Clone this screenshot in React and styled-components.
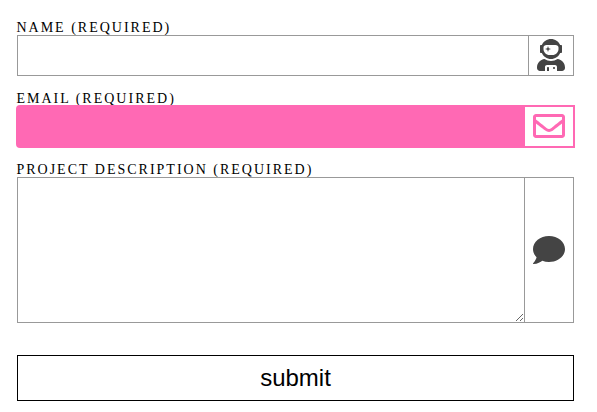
import React from "react";
import styled, { createGlobalStyle, css } from "styled-components";
import { FaUserAstronaut, FaRegEnvelope, FaComment } from "react-icons/fa";

const GlobalStyle = createGlobalStyle`
  *, *::before, *::after { box-sizing: border-box; }
  body { margin: 0; background: #fff; }
`;

const Form = styled.form`
  display: flex;
  flex-direction: column;
  gap: 14px;
  width: 597px;
  padding: 19px 23px 0 17px;
`;

const Field = styled.div`
  display: flex;
  flex-direction: column;
`;

const Label = styled.label`
  height: 16px;
  margin-left: -0.6px;
  font: 14px/18px "Liberation Serif", "Times New Roman", serif;
  letter-spacing: 2px;
  text-transform: uppercase;
  white-space: nowrap;
  color: #000;
`;

const Group = styled.div`
  display: flex;
  height: ${({ $height }) => $height}px;
  border: 1px solid #999;
  color: #444;

  ${({ $active }) =>
    $active &&
    css`
      margin: -1px;
      border: 2px solid hotpink;
      border-radius: 4px 0 0 4px;
      color: hotpink;
    `}
`;

const control = css`
  flex: 1;
  min-width: 0;
  margin: 0;
  padding: 8px;
  border: 0;
  border-radius: 0;
  outline: 0;
  background: ${({ $active }) => ($active ? "hotpink" : "#fff")};
  font: 16px "Liberation Sans", Arial, sans-serif;
`;

const Input = styled.input`
  ${control}
`;

const TextArea = styled.textarea`
  ${control}
  resize: both;
`;

const IconCell = styled.span`
  display: flex;
  align-items: ${({ $top }) => ($top ? "flex-start" : "center")};
  padding: ${({ $top = 0 }) => $top}px 8px 0;
  border-left: ${({ $active }) => ($active ? "0" : "1px solid #999")};

  svg {
    display: block;
    width: ${({ $iconWidth = 32 }) => $iconWidth}px;
    height: 32px;
  }
`;

const Submit = styled.button`
  height: 46px;
  margin-top: 18px;
  padding: 0;
  border: 1px solid #000;
  border-radius: 0;
  background: #fff;
  color: #000;
  font: 24px "Liberation Sans", Arial, sans-serif;
`;

export default function App() {
  return (
    <>
      <GlobalStyle />
      <Form onSubmit={(event) => event.preventDefault()}>
        <Field>
          <Label htmlFor="name">Name (required)</Label>
          <Group $height={41}>
            <Input id="name" type="text" />
            <IconCell $iconWidth={28} $top={3}>
              <FaUserAstronaut />
            </IconCell>
          </Group>
        </Field>
        <Field>
          <Label htmlFor="email">Email (required)</Label>
          <Group $height={43} $active>
            <Input id="email" type="email" $active />
            <IconCell $active $top={3}>
              <FaRegEnvelope />
            </IconCell>
          </Group>
        </Field>
        <Field>
          <Label htmlFor="description">Project description (required)</Label>
          <Group $height={146}>
            <TextArea id="description" />
            <IconCell>
              <FaComment />
            </IconCell>
          </Group>
        </Field>
        <Submit type="submit">submit</Submit>
      </Form>
    </>
  );
}
